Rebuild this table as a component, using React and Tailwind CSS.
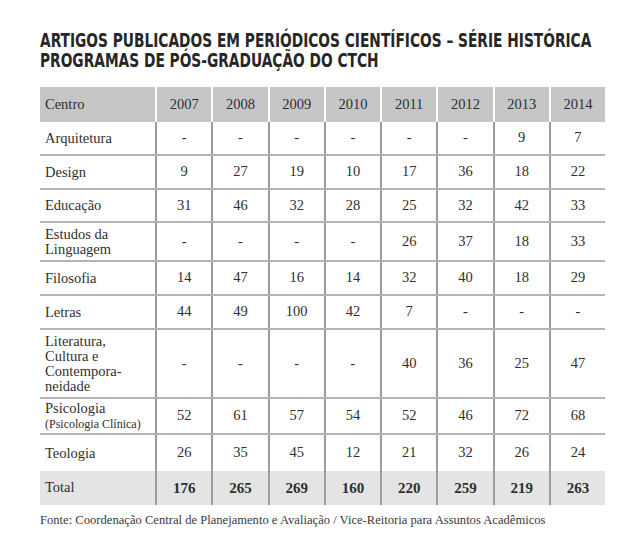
import React from "react";

const years = ["2007", "2008", "2009", "2010", "2011", "2012", "2013", "2014"];

const rows = [
  { label: ["Arquitetura"], values: ["-", "-", "-", "-", "-", "-", "9", "7"], h: "h-[34px]" },
  { label: ["Design"], values: ["9", "27", "19", "10", "17", "36", "18", "22"], h: "h-[34px]" },
  { label: ["Educação"], values: ["31", "46", "32", "28", "25", "32", "42", "33"], h: "h-[33px]" },
  { label: ["Estudos da", "Linguagem"], values: ["-", "-", "-", "-", "26", "37", "18", "33"], h: "h-[39px]" },
  { label: ["Filosofia"], values: ["14", "47", "16", "14", "32", "40", "18", "29"], h: "h-[34px]" },
  { label: ["Letras"], values: ["44", "49", "100", "42", "7", "-", "-", "-"], h: "h-[34px]" },
  { label: ["Literatura,", "Cultura e", "Contempora-", "neidade"], values: ["-", "-", "-", "-", "40", "36", "25", "47"], h: "h-[69px]" },
  { label: ["Psicologia"], sub: "(Psicologia Clínica)", values: ["52", "61", "57", "54", "52", "46", "72", "68"], h: "h-[36px]" },
  { label: ["Teologia"], values: ["26", "35", "45", "12", "21", "32", "26", "24"], h: "h-[36px]", last: true },
];

const totals = ["176", "265", "269", "160", "220", "259", "219", "263"];

export default function App() {
  return (
    <div className="w-[640px] h-[555px] bg-white pl-[40px] pt-[30px] text-[#2f2f2f] font-['Liberation_Serif',serif]">
      <h1 className="font-['DejaVu_Sans_Condensed','DejaVu_Sans',sans-serif] font-bold text-[19px] leading-[20px] text-[#262626] whitespace-nowrap origin-left scale-x-[0.805] w-[680px]">
        <div>ARTIGOS PUBLICADOS EM PERIÓDICOS CIENTÍFICOS – SÉRIE HISTÓRICA</div>
        <div>PROGRAMAS DE PÓS-GRADUAÇÃO DO CTCH</div>
      </h1>

      <div className="w-[565px] mt-[17px] text-[14.5px]">
        {/* header */}
        <div className="flex h-[35px] bg-[#c6c6c6]">
          <div className="w-[115px] flex items-center pl-[5px]">Centro</div>
          {years.map((y) => (
            <div key={y} className="flex-1 flex items-center justify-center border-l-2 border-white">
              {y}
            </div>
          ))}
        </div>

        {rows.map((r) => (
          <div key={r.label[0]} className={`flex ${r.h} ${r.last ? "" : "border-b-2 border-[#b4b4b4]"}`}>
            <div className="w-[115px] flex flex-col justify-center pl-[5px] leading-[15px]">
              {r.label.map((l) => (
                <span key={l}>{l}</span>
              ))}
              {r.sub && <span className="text-[12px] leading-[16px]">{r.sub}</span>}
            </div>
            {r.values.map((v, i) => (
              <div key={i} className="flex-1 flex items-center justify-center border-l-2 border-[#9c9c9c]">
                {v}
              </div>
            ))}
          </div>
        ))}

        <div className="flex h-[34px] bg-[#e4e4e4]">
          <div className="w-[115px] flex items-center pl-[5px]">Total</div>
          {totals.map((v, i) => (
            <div key={i} className="flex-1 flex items-center justify-center border-l-2 border-[#9c9c9c] font-bold text-[15px]">
              {v}
            </div>
          ))}
        </div>
      </div>

      <p className="mt-[7px] text-[12.6px] leading-[16px] text-[#3a3a3a]">
        Fonte: Coordenação Central de Planejamento e Avaliação / Vice-Reitoria para Assuntos Acadêmicos
      </p>
    </div>
  );
}
